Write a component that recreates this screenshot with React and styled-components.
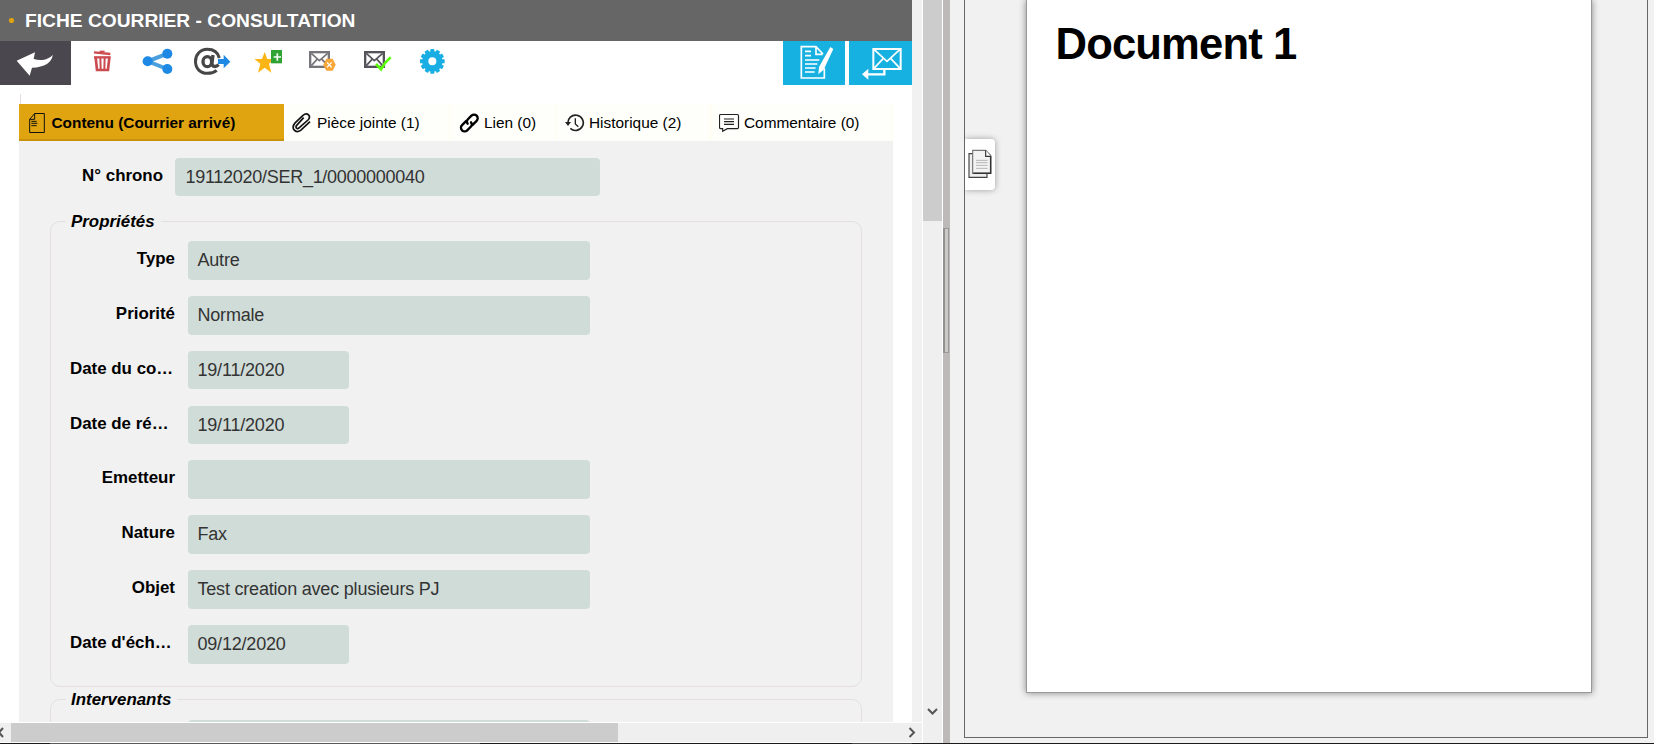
import React from "react";
import styled, { createGlobalStyle } from "styled-components";

const Global = createGlobalStyle`
  * { box-sizing: border-box; }
  body {
    margin: 0;
    background: #f1f1f1;
    font-family: "Liberation Sans", Arial, sans-serif;
    color: #000;
    overflow: hidden;
  }
`;

const Screen = styled.div`
  width: 1654px;
  height: 744px;
  display: flex;
  flex-direction: column;
`;
const Main = styled.div`
  display: flex;
  height: 743px;
`;
const BottomEdge = styled.div`
  height: 1px;
  background: linear-gradient(90deg, #1b1b1b 50px, #5a5a5a 50px 480px, #1b1b1b 480px 852px, #444 852px 912px, #1b1b1b 912px);
`;

const Left = styled.section`
  width: 922px;
  display: flex;
  flex-direction: column;
`;
const Sheet = styled.div`
  width: 912px;
  height: 722px;
  background: #fff;
  overflow: hidden;
`;
const Header = styled.header`
  height: 41px;
  background: #666;
  display: flex;
  align-items: center;
  padding-left: 9px;
`;
const Bullet = styled.span`
  width: 5px;
  height: 5px;
  margin-right: 11px;
  border-radius: 2px;
  background: #e0a30f;
`;
const Title = styled.h1`
  margin: 0;
  font-size: 19.2px;
  line-height: 22px;
  font-weight: bold;
  color: #fff;
  white-space: nowrap;
`;

const Toolbar = styled.div`
  display: flex;
  height: 44px;
`;
const BackButton = styled.div`
  width: 71px;
  height: 44px;
  background: #4b474f;
`;
const Drawing = styled.svg`
  display: block;
  flex: none;
  height: ${(p) => p.$h}px;
  width: ${(p) => p.$w}px;
  margin-left: ${(p) => p.$gap || 0}px;
`;
const Actions = styled.div`
  display: flex;
  gap: 4px;
  margin-left: auto;
`;
const ActionButton = styled.div`
  width: ${(p) => p.$w}px;
  background: #16b0e1;
`;

const Guide = styled.div`
  width: 1px;
  height: 10px;
  margin: 9px 0 0 20px;
  background: #e6dfe2;
`;
const Tabs = styled.nav`
  display: flex;
  width: 874px;
  height: 37px;
  margin-left: 19px;
  background: #fffef4;
`;
const Tab = styled.div`
  display: flex;
  width: ${(p) => p.$w}px;
  margin-right: ${(p) => p.$after || 0}px;
  background: ${(p) => (p.$active ? "#e0a410" : "#fefffa")};
  border-bottom: ${(p) => (p.$active ? "2px solid #c8920e" : "none")};
  font-weight: ${(p) => (p.$active ? "bold" : "normal")};
  font-size: 15.4px;
  line-height: 38px;
  white-space: nowrap;
`;
const TabText = styled.span`
  margin-left: ${(p) => p.$gap}px;
`;

const Body = styled.div`
  width: 874px;
  height: 581px;
  margin-left: 19px;
  padding-top: 17px;
  background: #f1f1f1;
  overflow: hidden;
`;
const Field = styled.div`
  display: flex;
  height: ${(p) => p.$h || 54.86}px;
`;
const Label = styled.label`
  width: ${(p) => p.$w || 105}px;
  margin-right: ${(p) => p.$after || 13}px;
  text-align: ${(p) => (p.$cut ? "left" : "right")};
  font-size: 16.9px;
  font-weight: bold;
  line-height: 35px;
  white-space: nowrap;
`;
const Value = styled.div`
  width: ${(p) => p.$w || 402}px;
  height: ${(p) => p.$h || 38.7}px;
  padding-left: ${(p) => p.$pad || 9.5}px;
  border-radius: 4px;
  background: #d0dcd8;
  color: #333;
  font-size: 18px;
  letter-spacing: ${(p) => p.$track || -0.2}px;
  line-height: 39px;
  white-space: nowrap;
`;
const Group = styled.fieldset`
  width: 812px;
  height: ${(p) => p.$h}px;
  margin: 0 0 3px 31px;
  padding: ${(p) => p.$top}px 0 0 19px;
  border: 1px solid #e5dfdf;
  border-radius: 10px;
`;
const Legend = styled.legend`
  margin-left: -4px;
  padding: 0 6px 0 5px;
  font-size: 16.9px;
  font-weight: bold;
  font-style: italic;
  line-height: 19px;
`;

const HScroll = styled.div`
  display: flex;
  align-items: center;
  height: 21px;
  border-top: 1px solid #fff;
  border-bottom: 1px solid #fff;
  background: #efefef;
`;
const HThumb = styled.div`
  width: 607px;
  height: 19px;
  background: #ccc;
`;
const VScroll = styled.div`
  width: 21px;
  border: solid #fff;
  border-width: 0 1px;
  background: #efefef;
`;
const VThumb = styled.div`
  height: 221px;
  margin-bottom: 487px;
  background: #ccc;
`;
const Splitter = styled.div`
  width: 7px;
  padding-top: 228px;
  background: #bdb9b9;
`;
const Grip = styled.div`
  width: 6px;
  height: 125px;
  border: 1px solid #999;
  border-left: 2px solid #929090;
  background: #cac9c6;
`;

const Viewer = styled.section`
  position: relative;
  width: 684px;
  height: 738px;
  margin-left: 14px;
  padding-left: 61px;
  border: solid #666;
  border-width: 0 1px 1px;
  background: #f1f1f1;
  overflow: hidden;
`;
const Page = styled.article`
  width: 566px;
  height: 693px;
  border: solid #999;
  border-width: 0 1px 1px;
  padding: 18px 0 0 28.5px;
  background: #fff;
  box-shadow: 0 0 7px rgba(0, 0, 0, 0.45);
`;
const DocTitle = styled.h2`
  margin: 0;
  font-size: 43.6px;
  letter-spacing: -0.85px;
  line-height: 52px;
  font-weight: bold;
`;
const ThumbTab = styled.div`
  position: absolute;
  left: 0;
  top: 139px;
  width: 30px;
  height: 51px;
  background: #fff;
  border-radius: 0 4px 4px 0;
  box-shadow: 0 0 6px rgba(0, 0, 0, 0.35);
`;

// Toolbar drawings use three units per pixel.
const ToolIcon = ({ x, w, gap, children }) => (
  <Drawing $h={44} $w={w} $gap={gap} viewBox={`${x} 123 ${w * 3} 132`}>{children}</Drawing>
);
const TabIcon = ({ x, w, gap, children }) => (
  <Drawing $h={37} $w={w} $gap={gap} viewBox={`${x} 42 ${w * 3} 111`}>{children}</Drawing>
);

const gearTeeth = Array.from({ length: 12 }, (_, i) => i * 30);

const fields = [
  { label: "Type", value: "Autre" },
  { label: "Priorité", value: "Normale" },
  { label: "Date du co…", value: "19/11/2020", date: true },
  { label: "Date de ré…", value: "19/11/2020", date: true },
  { label: "Emetteur", value: "" },
  { label: "Nature", value: "Fax" },
  { label: "Objet", value: "Test creation avec plusieurs PJ" },
  { label: "Date d'éch…", value: "09/12/2020", date: true },
];

const Envelope = ({ x, color }) => (
  <g transform={`translate(${x} 153)`} fill="none" stroke={color} strokeWidth="7">
    <rect x="3.5" y="3.5" width="56" height="44" />
    <path d="M7 7l24 22L56 7M7 44l17-19M56 44L39 25" strokeWidth="5" />
  </g>
);

export default function App() {
  return (
    <Screen>
      <Global />
      <Main>
        <Left>
          <Sheet>
            <Header>
              <Bullet />
              <Title>FICHE COURRIER - CONSULTATION</Title>
            </Header>
            <Toolbar>
              <BackButton>
                <ToolIcon x={0} w={71}>
                  <path d="M50 182L105 157L101 177C127 184 148 177 158 164C157 186 134 202 96 203L89 227Z" fill="#fff" />
                </ToolIcon>
              </BackButton>
              <ToolIcon x={279} w={19} gap={22}>
                <g fill="none" stroke="#cb4b50">
                  <path d="M282 157L331 162" strokeWidth="7" />
                  <path d="M299 154h15" strokeWidth="4" />
                  <path d="M282 172h50" strokeWidth="7" />
                  <path d="M287 172l4 38h33l4-38" strokeWidth="8" />
                  <path d="M301 171l1 39M314 171l-1 39" strokeWidth="6" />
                </g>
              </ToolIcon>
              <ToolIcon x={426} w={31} gap={30}>
                <path d="M502 161L443 184L502 207" fill="none" stroke="#4aa0dd" strokeWidth="12" />
                <g fill="#1e88e5"><circle cx="502" cy="161" r="15" /><circle cx="443" cy="184" r="15" /><circle cx="502" cy="207" r="15" /></g>
              </ToolIcon>
              <ToolIcon x={579} w={38} gap={20}>
                <g fill="none" stroke="#464646" strokeWidth="9">
                  <path d="M658 174C653 155 640 148 622 148C601 148 586.500 163 586.500 184C586.500 206 601 220 622 220C633 220 643 217 650 211" />
                  <ellipse cx="622" cy="185" rx="13" ry="15" strokeWidth="10" />
                  <path d="M639 165L636 188C635 202 648 202 656 194" strokeWidth="10" />
                </g>
                <path d="M654 177h17v-13l20 21l-20 20v-13h-17z" fill="#1e88e5" />
              </ToolIcon>
              <ToolIcon x={759} w={30} gap={22}>
                <path d="M794 156l8 21h22l-17 14l7 27l-20-15l-20 15l7-27l-18-14h23z" fill="#fdb515" />
                <rect x="813" y="150" width="33" height="40" fill="#2fa333" />
                <path d="M821 171h22M832 160v22" stroke="#fff" strokeWidth="5" />
              </ToolIcon>
              <ToolIcon x={924} w={28} gap={25}>
                <Envelope x={927} color="#77757b" />
                <path d="M979 176h19l9 18l-9 18h-19l-9-18z" fill="#f7a638" />
                <path d="M981 187l14 15M995 187l-14 15" stroke="#fff" strokeWidth="4" />
              </ToolIcon>
              <ToolIcon x={1089} w={29} gap={27}>
                <Envelope x={1092} color="#55535a" />
                <path d="M1128 192l15 16C1151 193 1160 182 1172 172" fill="none" stroke="#5bff05" strokeWidth="8" />
              </ToolIcon>
              <ToolIcon x={1257} w={27} gap={27}>
                <circle cx="1297" cy="184" r="21.5" fill="none" stroke="#19aee3" strokeWidth="19" />
                {gearTeeth.map((a) => (
                  <rect key={a} x="1291" y="147" width="12" height="13" rx="2" fill="#19aee3" transform={`rotate(${a} 1297 184)`} />
                ))}
              </ToolIcon>
              <Actions>
                <ActionButton $w={62}>
                  <ToolIcon x={69} w={62}>
                    <g fill="none" stroke="#fff" strokeWidth="5">
                      <path d="M193 205V234H124V140H168L189 162M168 140v23h20" />
                      <path d="M135 154h18M135 167h18M135 180h43M135 192h37M135 204h32M135 216h29" />
                    </g>
                    <path d="M211 141l9 6l-29 62l-16 14l2-22z" fill="#fff" />
                  </ToolIcon>
                </ActionButton>
                <ActionButton $w={63}>
                  <ToolIcon x={267} w={63}>
                    <g fill="none" stroke="#fff" strokeWidth="6">
                      <rect x="340" y="147" width="82" height="60" />
                      <path d="M342 148l39 36l39-36M342 205l28-30M420 205l-28-30" strokeWidth="5" />
                      <path d="M373 208v15H320" strokeWidth="7" />
                    </g>
                    <path d="M306 223l19-17v33z" fill="#fff" />
                  </ToolIcon>
                </ActionButton>
              </Actions>
            </Toolbar>
            <Guide />
            <Tabs>
              <Tab $w={265} $active>
                <TabIcon x={87} w={16} gap={10}>
                  <path d="M104 70.5H133V127.5H89V88ZM104 70.5V88H89" fill="none" stroke="#111" strokeWidth="3" />
                  <path d="M94 94h16M94 100h18M94 107h16" stroke="#111" strokeWidth="3" />
                </TabIcon>
                <TabText $gap={6.5}>Contenu (Courrier arrivé)</TabText>
              </Tab>
              <Tab $w={165} $after={3}>
                <TabIcon x={876} w={20} gap={8}>
                  <path d="M911 83L890 106C884 113 892 119 898 113L924 90C935 78 922 66 909 76L886 98C871 114 886 132 902 121L930 95" fill="none" stroke="#111" strokeWidth="5" />
                </TabIcon>
                <TabText $gap={5}>Pièce jointe (1)</TabText>
              </Tab>
              <Tab $w={103} $after={2}>
                <TabIcon x={56} w={21} gap={7}>
                  <g transform="translate(87 99) rotate(-45)" fill="none" stroke="#000" strokeWidth="7" strokeLinecap="round">
                    <path d="M-2 -11H-20A11 11 0 0 0 -20 11H-4A10 10 0 0 0 5 2" />
                    <path d="M2 11H20A11 11 0 0 0 20 -11H4A10 10 0 0 0 -5 -2" />
                  </g>
                </TabIcon>
                <TabText $gap={4}>Lien (0)</TabText>
              </Tab>
              <Tab $w={152} $after={4}>
                <TabIcon x={375} w={20} gap={8}>
                  <path d="M384 101A23 23 0 1 1 391 115" fill="none" stroke="#222" strokeWidth="5" />
                  <path d="M375 96h18l-9 12z" fill="#222" />
                  <path d="M406 85v17l9 8" fill="none" stroke="#222" strokeWidth="4" />
                </TabIcon>
                <TabText $gap={4}>Historique (2)</TabText>
              </Tab>
              <Tab $w={178}>
                <TabIcon x={837} w={21} gap={6}>
                  <path d="M842 73.5H892Q895.5 73.5 895.5 77V112Q895.5 116 892 116H862L848 124V116H842Q838.5 116 838.5 112V77Q838.5 73.5 842 73.5Z" fill="none" stroke="#222" strokeWidth="3.5" />
                  <path d="M852 87h30M852 95h30M852 103h30" stroke="#222" strokeWidth="3.5" />
                </TabIcon>
                <TabText $gap={4}>Commentaire (0)</TabText>
              </Tab>
            </Tabs>
            <Body>
              <Field $h={54}>
                <Label $w={144} $after={12}>N° chrono</Label>
                <Value $w={425} $h={38} $pad={10.5} $track={-0.28}>19112020/SER_1/0000000040</Value>
              </Field>
              <Group $h={475} $top={10}>
                <Legend>Propriétés</Legend>
                {fields.map((f) => (
                  <Field key={f.label}>
                    <Label $cut={f.date}>{f.label}</Label>
                    <Value $w={f.date ? 161 : 402}>{f.value}</Value>
                  </Field>
                ))}
              </Group>
              <Group $h={120} $top={11}>
                <Legend>Intervenants</Legend>
                <Field>
                  <Label />
                  <Value />
                </Field>
              </Group>
            </Body>
          </Sheet>
          <HScroll>
            <Drawing $h={19} $w={11} viewBox="0 0 11 19">
              <path d="M3 5L-1 9.5L3 14" fill="none" stroke="#555" strokeWidth="2" />
            </Drawing>
            <HThumb />
            <Drawing $h={19} $w={9} $gap={290} viewBox="0 0 9 19">
              <path d="M1.5 5L6 9.5L1.5 14" fill="none" stroke="#555" strokeWidth="2" />
            </Drawing>
          </HScroll>
        </Left>
        <VScroll>
          <VThumb />
          <Drawing $h={8} $w={19} viewBox="0 0 19 8">
            <path d="M5 1L9.5 5.5L14 1" fill="none" stroke="#555" strokeWidth="2" />
          </Drawing>
        </VScroll>
        <Splitter>
          <Grip />
        </Splitter>
        <Viewer>
          <Page>
            <DocTitle>Document 1</DocTitle>
          </Page>
          <ThumbTab>
            <Drawing $h={51} $w={30} viewBox="615 417 90 153">
              <path d="M627 461H640V520H681V532H627Z" fill="#eee" stroke="#444" strokeWidth="3.5" />
              <path d="M638 451H677L692 466V520H638Z" fill="#f3f3f3" stroke="#777" strokeWidth="3.5" />
              <path d="M677 451V469H692" fill="#fff" stroke="#333" strokeWidth="3.5" />
              <path d="M692 468V520H640" fill="none" stroke="#333" strokeWidth="4.5" />
              <path d="M648 481h35M648 488h35M648 496h35M648 505h35" stroke="#b5b5b5" strokeWidth="3" />
            </Drawing>
          </ThumbTab>
        </Viewer>
      </Main>
      <BottomEdge />
    </Screen>
  );
}
